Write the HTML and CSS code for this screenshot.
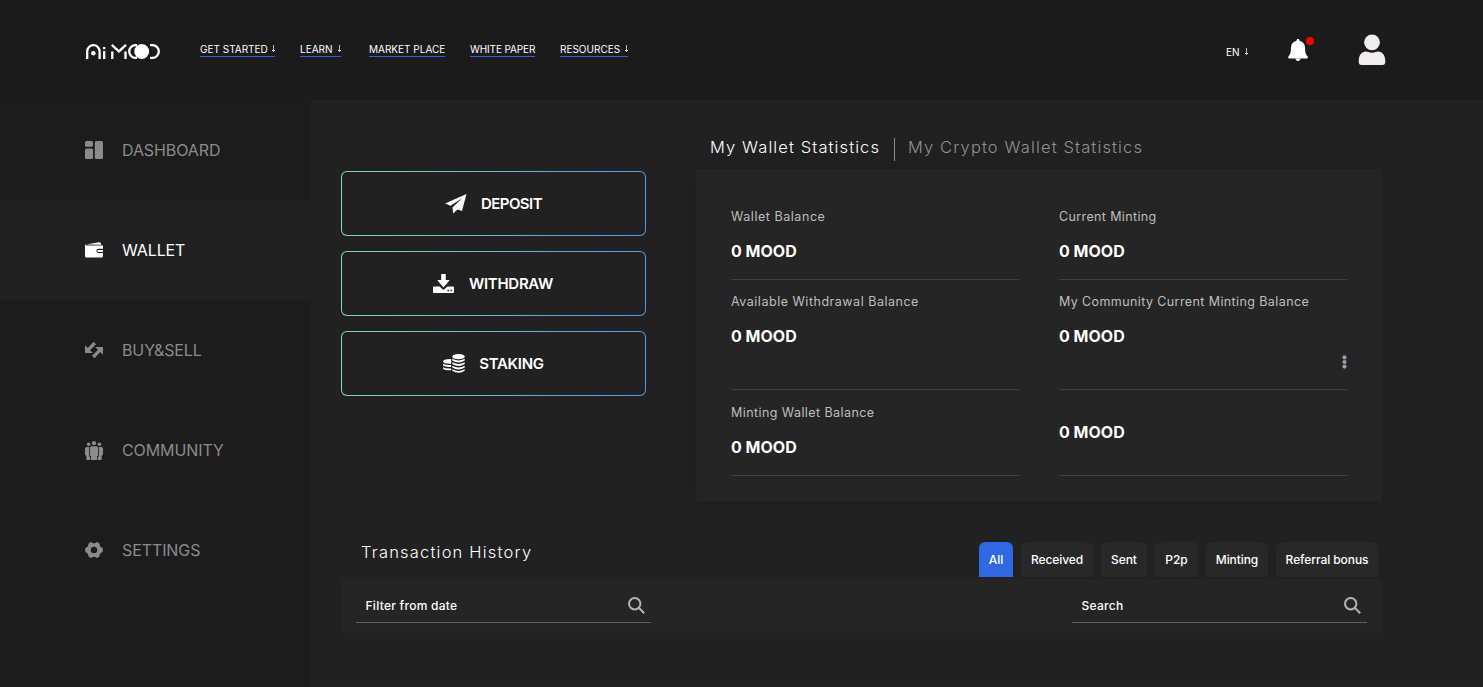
FILE: index.html
```
<!DOCTYPE html>
<html lang="en">
<head>
<meta charset="utf-8">
<title>AiMood Wallet</title>
<link rel="stylesheet" href="styles.css">
</head>
<body>
<header class="header">
  <svg class="logo" width="76" height="17" viewBox="0 0 76 17" fill="none" stroke="#fff" stroke-width="2.3">
    <path d="M2.200 16V8.400a6.200 6.200 0 0 1 12.400 0V16"/><circle cx="8.300" cy="10.300" r="2.300" fill="#fff" stroke="none"/>
    <path d="M19.200 8V16M19.200 4v2.200M27.300 8.500V16M40.500 8.500V16M26.800 1.800l7.100 6.600 7.100-6.600"/>
    <path d="M52 2.200h-1.500a6.300 6.300 0 0 0 0 12.600H52"/>
    <circle cx="56.700" cy="8.500" r="7.400" fill="#fff" stroke="none"/><path d="M65 2.200h2.500a6.300 6.300 0 0 1 0 12.600H65"/>
  </svg>
  <nav class="nav">
    <a class="link link-start">GET STARTED <i class="arrow"></i></a>
    <a class="link link-learn">LEARN <i class="arrow"></i></a>
    <a class="link link-market">MARKET PLACE</a>
    <a class="link link-paper">WHITE PAPER</a>
    <a class="link link-res">RESOURCES <i class="arrow"></i></a>
  </nav>
  <div class="tools">
    <span class="lang">EN <i class="arrow"></i></span>
    <span class="bell"><svg width="20" height="23" viewBox="0 0 20 23" fill="#fff"><path d="M10 0c1 0 1.500.7 1.500 1.700C15 2.500 17 5 17 8.500c0 5 .8 7 2.400 8.800.8 1 .4 2.300-.9 2.300H1.500C.2 19.600-.2 18.300.6 17.300 2.200 15.500 3 13.500 3 8.500 3 5 5 2.500 8.500 1.700 8.500.7 9 0 10 0z"/><path d="M7.500 19.600h5c0 1.600-1.100 2.500-2.500 2.500s-2.500-.9-2.500-2.500z"/></svg><b class="dot"></b></span>
    <svg class="user" width="28" height="32" viewBox="0 0 28 32" fill="#efedee"><circle cx="14" cy="8.300" r="7.900"/><path d="M8 17.500c1.500 0 3 1.200 6 1.200s4.500-1.200 6-1.200c4.500 0 7.300 4 7.300 9.500 0 3-.8 4-3 4H3.700c-2.200 0-3-1-3-4 0-5.500 2.800-9.500 7.300-9.500z"/></svg>
  </div>
</header>
<div class="body">
  <aside class="sidebar">
    <a class="item"><svg width="18" height="18" viewBox="0 0 18 18"><rect width="8" height="5.800" rx="1.500"/><rect y="7.500" width="8" height="10.500" rx="1.500"/><rect x="9.800" width="8.200" height="18" rx="1.500"/></svg><span>DASHBOARD</span></a>
    <a class="item active"><svg width="18" height="18" viewBox="0 0 18 18"><path d="M1 3.500 14 1.200q1.500-.2 2 1.300l.4 1.200z"/><path d="M1.200 4.500H18v3.300h-4.500a2.100 2.100 0 0 0 0 4.200H18v3a1.500 1.500 0 0 1-1.500 1.500h-15A1.500 1.500 0 0 1 0 15V3.200z"/><path d="M13.300 8.900H18v2h-4.700a1 1 0 0 1 0-2z"/></svg><span>WALLET</span></a>
    <a class="item"><svg width="18" height="18" viewBox="0 0 18 18"><path d="M0 4.200 2.800 7 8.500.8 11 3.200 5 9.200 7.900 12H0zM18 13.800 15.200 11l-5.700 6.200L7 14.800l6-6L10.100 6H18z"/></svg><span>BUY&amp;SELL</span></a>
    <a class="item"><svg width="18" height="19" viewBox="0 0 18 19"><circle cx="9" cy="2.200" r="2.100"/><circle cx="3.600" cy="3.300" r="1.800"/><circle cx="14.400" cy="3.300" r="1.800"/><path d="M5 6.500 6 5.200h6l1 1.300V15h-1v4H6v-4H5zM4.200 6v9.800h1V19H1.300v-4L0 13.500V7.500Q0 6 1.500 6zM13.800 6v9.800h-1V19h3.900v-4l1.300-1.500V7.500Q18 6 16.500 6z"/></svg><span>COMMUNITY</span></a>
    <a class="item"><svg width="18" height="18" viewBox="0 0 18 18"><path fill-rule="evenodd" d="M5 1.400Q6.500.6 7.400 2q1.600.6 3.200 0 .9-1.400 2.400-.6 2 .9 1.700 2.500.2 1.700 1.600 2.400 1.700.2 1.700 2.700t-1.700 2.700q-1.400.7-1.600 2.400.3 1.600-1.700 2.500-1.500.8-2.400-.6-1.600-.6-3.200 0-.9 1.400-2.400.6-2-.9-1.700-2.500-.2-1.700-1.600-2.400Q0 11.500 0 9t1.700-2.700q1.400-.7 1.600-2.400Q3 2.300 5 1.400zM9 5.800a3.200 3.200 0 1 0 0 6.400 3.200 3.200 0 0 0 0-6.400z"/></svg><span>SETTINGS</span></a>
  </aside>
  <main class="main">
    <section class="top">
      <div class="actions">
        <button class="action"><svg width="22" height="20" viewBox="0 0 22 20"><path d="M21.500 0 17 17l-4.500-1.500L8.200 19.500 7.500 13.500 17 4.200 5.500 11.800 0 9.500z"/></svg><span class="a-dep">DEPOSIT</span></button>
        <button class="action"><svg width="21" height="19" viewBox="0 0 21 19"><path d="M8.200 0h4.600v6h4L10.500 13.500 4.200 6h4z"/><path fill-rule="evenodd" d="M1 12.500h5.500L10.500 16l4-3.500H20q1 0 1 1V18q0 1-1 1H1q-1 0-1-1v-4.500q0-1 1-1zm13.500 3.200v1.500H16v-1.500zm3 0v1.500H19v-1.500z"/></svg><span class="a-wit">WITHDRAW</span></button>
        <button class="action"><svg width="22" height="19" viewBox="0 0 22 19"><ellipse cx="15.500" cy="2.700" rx="6.200" ry="2.600"/><path d="M9.300 4.800q6.200 3.300 12.400 0v1.700q-6.200 4-12.400 0zM9.300 8.300q6.200 3.300 12.400 0V10q-6.200 4-12.400 0zM9.300 11.800q6.200 3.300 12.400 0v1.700q-6.200 4-12.400 0zM9.300 15.300q6.200 3.300 12.400 0v1.500q-6.200 4-12.400 0z"/><path d="M8.200 5.100v4.700Q0 10 0 7.300 1 5 8.200 5.100zM0 9.800q3 1.700 8.200 1.200v1.900Q2 13.300 0 11.500zM0 13.200q3 1.700 8.200 1.200v1.800Q2 16.500 0 15z"/></svg><span class="a-sta">STAKING</span></button>
      </div>
      <div class="stats">
        <div class="tabs"><span class="tab tab-on">My Wallet Statistics</span><span class="tab tab-off">My Crypto Wallet Statistics</span></div>
        <div class="card">
          <div class="cell c1"><span class="name n1">Wallet Balance</span><b class="val">0 MOOD</b></div>
          <div class="cell c1"><span class="name n2">Current Minting</span><b class="val">0 MOOD</b></div>
          <div class="cell c2"><span class="name n3">Available Withdrawal Balance</span><b class="val">0 MOOD</b></div>
          <div class="cell c2"><span class="name n4">My Community Current Minting Balance</span><b class="val">0 MOOD</b><svg class="more" width="5" height="14" viewBox="0 0 5 14"><circle cx="2.500" cy="2.400" r="2.100"/><circle cx="2.500" cy="7" r="2.100"/><circle cx="2.500" cy="11.600" r="2.100"/></svg></div>
          <div class="cell c3"><span class="name n5">Minting Wallet Balance</span><b class="val">0 MOOD</b></div>
          <div class="cell c3 bare"><b class="val">0 MOOD</b></div>
        </div>
      </div>
    </section>
    <section class="history">
      <div class="history-head">
        <h2 class="title">Transaction History</h2>
        <div class="chips"><span class="chip k1 on">All</span><span class="chip k2">Received</span><span class="chip k3">Sent</span><span class="chip k4">P2p</span><span class="chip k5">Minting</span><span class="chip k6">Referral bonus</span></div>
      </div>
      <div class="filters">
        <div class="field"><span>Filter from date</span><svg width="17" height="17" viewBox="0 0 17 17"><circle cx="6.700" cy="6.700" r="5.700"/><path d="m10.800 10.800 5.400 5.400"/></svg></div>
        <div class="field"><span>Search</span><svg width="17" height="17" viewBox="0 0 17 17"><circle cx="6.700" cy="6.700" r="5.700"/><path d="m10.800 10.800 5.400 5.400"/></svg></div>
      </div>
    </section>
  </main>
</div>
</body>
</html>
```
FILE: styles.css
```
* { box-sizing: border-box; }
body { margin: 0; height: 687px; overflow: hidden; background: #212121; color: #fff; font-family: Inter, "Liberation Sans", sans-serif; }
.header { height: 100px; background: #1b1b1b; display: flex; align-items: flex-start; padding-left: 85px; padding-right: 97px; }
.logo { margin-top: 43px; flex: none; }
.nav { display: flex; margin-left: 39px; margin-top: 43px; }
.link { display: flex; justify-content: space-between; height: 14px; border-bottom: 1px solid #2c64e0; font-size: 10px; line-height: 13px; color: #fff; white-space: nowrap; }
.link-start { width: 75px; margin-right: 25px; }
.link-learn { width: 41px; margin-right: 28px; }
.link-market { width: 76px; margin-right: 25px; }
.link-paper { width: 65px; margin-right: 25px; letter-spacing: -.12px; }
.link-res { width: 68px; }
.arrow { flex: none; width: 3px; height: 7px; margin-top: 2px; background: linear-gradient(#bbb, #bbb) center / 1px 100% no-repeat, linear-gradient(#eee, #eee) 0 5px / 3px 1px no-repeat; }
.tools { margin-left: auto; display: flex; align-items: flex-start; }
.lang { display: flex; justify-content: space-between; font-size: 10px; line-height: 13px; margin-top: 46px; width: 22px; margin-right: 40px; }
.bell { position: relative; margin-top: 39px; width: 20px; height: 23px; margin-right: 50px; }
.bell svg { display: block; }
.dot { position: absolute; left: 18px; top: -2px; width: 8px; height: 8px; border-radius: 50%; background: #f00; }
.user { margin-top: 34px; }
.body { display: flex; height: 587px; }
.sidebar { width: 311px; background: #1c1c1c; flex: none; }
.item { height: 100px; display: flex; align-items: center; gap: 19px; padding-left: 85px; color: #8b8b8b; fill: #8b8b8b; font-size: 16px; letter-spacing: -.1px; }
.item.active { background: #212121; color: #fff; fill: #fff; }
.main { flex: 1; padding: 0 101px 0 30px; }
.top { display: flex; height: 401px; }
.actions { width: 305px; padding-top: 71px; display: flex; flex-direction: column; gap: 15px; }
.action { height: 65px; border: 1px solid transparent; border-radius: 6px; background: linear-gradient(#212121, #212121) padding-box, linear-gradient(100deg, #7be0a6, #63bdc9 50%, #4f9ae8) border-box; color: #fff; fill: #fff; font: 600 15px Inter, "Liberation Sans", sans-serif; display: flex; align-items: center; justify-content: center; gap: 14px; padding: 0; }
.a-dep { letter-spacing: -.55px; }
.a-wit { letter-spacing: -.3px; margin-left: 1px; margin-right: 1px; }
.a-sta { letter-spacing: -.3px; }
.stats { margin-left: 50px; width: 686px; }
.tabs { height: 69px; padding: 38px 0 0 14px; display: flex; }
.tab { font-size: 16.500px; line-height: 19px; height: 23px; white-space: nowrap; font-weight: 300; }
.tab-on { width: 185px; border-right: 1px solid #8c8c8c; letter-spacing: 1.1px; }
.tab-off { margin-left: 13px; color: #929292; letter-spacing: 1.13px; }
.card { height: 332px; background: #252525; box-shadow: 0 0 20px rgba(0,0,0,.1); padding: 35px 35px 0; display: grid; grid-template-columns: 288px 288px; column-gap: 40px; grid-template-rows: 76px 110px 86px; }
.cell { border-bottom: 1px solid #3e3e47; position: relative; display: flex; flex-direction: column; }
.name { font-size: 12.500px; line-height: 18px; margin-top: 4px; color: #bfbfbf; }
.n1 { letter-spacing: .55px; }
.n2 { letter-spacing: .37px; }
.n3 { letter-spacing: .52px; }
.n4 { letter-spacing: .4px; }
.n5 { letter-spacing: .43px; }
.c2 .name { margin-top: 13px; }
.c3 .name { margin-top: 14px; }
.val { font-size: 16px; line-height: 24px; margin-top: 13px; font-weight: 700; }
.bare .val { margin-top: 30px; }
.more { position: absolute; right: 0; top: 75px; fill: #9a9db0; }
.history-head { display: flex; justify-content: space-between; height: 76px; padding: 41px 4px 0 20px; }
.title { margin: 0; font-size: 16.500px; line-height: 20px; font-weight: 300; letter-spacing: 1.2px; }
.chips { display: flex; gap: 8px; }
.chip { height: 35px; border-radius: 6px 6px 0 0; background: #282828; font-size: 12px; line-height: 35px; text-align: center; white-space: nowrap; font-weight: 500; letter-spacing: -.08px; }
.chip.on { background: #2f68e0; }
.k1 { width: 34px; } .k2 { width: 72px; } .k3 { width: 46px; } .k4 { width: 43px; } .k5 { width: 62px; } .k6 { width: 102px; }
.filters { margin-top: 2px; height: 54px; background: #252525; display: flex; justify-content: space-between; padding: 9px 15px 0; }
.field { width: 295px; height: 35px; border-bottom: 1px solid #606060; display: flex; justify-content: space-between; align-items: center; padding: 0 6px 0 9.500px; font-size: 12px; font-weight: 500; letter-spacing: .28px; }
.field svg { fill: none; stroke: #b0b5b9; stroke-width: 2; }
```
